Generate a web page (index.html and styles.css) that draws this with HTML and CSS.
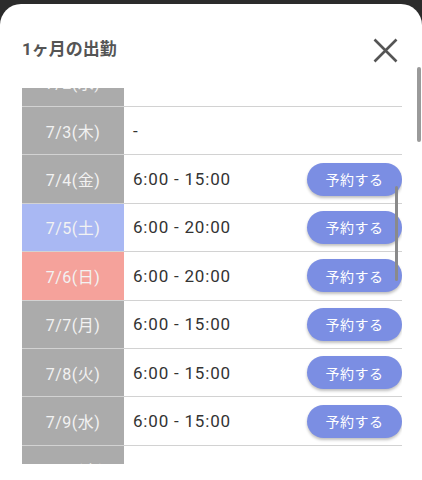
FILE: index.html
```html
<!DOCTYPE html>
<html lang="ja">
<head>
<meta charset="utf-8">
<link rel="stylesheet" href="styles.css">
</head>
<body>
<div class="modal">
  <div class="header">
    <h1 class="title">1ヶ月の出勤</h1>
    <svg class="close" width="25" height="25" viewBox="0 0 25 25"><path d="M1.5 1.5 L23.5 23.5 M23.5 1.5 L1.5 23.5" stroke="#555" stroke-width="2.6" fill="none"/></svg>
  </div>
  <div class="list">
    <div class="rows">
      <div class="row"><div class="date">7/2(水)</div><div class="time">-</div></div>
      <div class="row"><div class="date">7/3(木)</div><div class="time">-</div></div>
      <div class="row"><div class="date">7/4(金)</div><div class="time">6:00 - 15:00</div><button class="btn">予約する</button></div>
      <div class="row"><div class="date sat">7/5(土)</div><div class="time">6:00 - 20:00</div><button class="btn">予約する</button></div>
      <div class="row"><div class="date sun">7/6(日)</div><div class="time">6:00 - 20:00</div><button class="btn">予約する</button></div>
      <div class="row"><div class="date">7/7(月)</div><div class="time">6:00 - 15:00</div><button class="btn">予約する</button></div>
      <div class="row"><div class="date">7/8(火)</div><div class="time">6:00 - 15:00</div><button class="btn">予約する</button></div>
      <div class="row"><div class="date">7/9(水)</div><div class="time">6:00 - 15:00</div><button class="btn">予約する</button></div>
      <div class="row"><div class="date">7/10(木)</div><div class="time">-</div></div>
    </div>
  </div>
  <div class="scroll-outer"></div>
  <div class="scroll-inner"></div>
</div>
</body>
</html>
```
FILE: styles.css
```css
html, body {
  margin: 0;
  padding: 0;
  background: #2b2b2b;
  font-family: Roboto, "Noto Sans CJK JP", sans-serif;
}
.modal {
  position: relative;
  margin-top: 4px;
  height: 476px;
  box-sizing: border-box;
  background: #fff;
  border-radius: 21px 21px 0 0;
  padding: 33px 20px 0 22px;
}
.header {
  display: flex;
  justify-content: space-between;
  align-items: center;
  height: 24px;
}
.title {
  margin: 0;
  font-size: 17px;
  font-weight: bold;
  color: #555;
  line-height: 24px;
}
.close {
  display: block;
  margin-right: 4px;
  margin-top: 2px;
}
.list {
  margin-top: 27px;
  height: 376px;
  overflow: hidden;
}
.rows {
  margin-top: -29.5px;
}
.row {
  display: flex;
  align-items: center;
  height: 48.43px;
  box-sizing: border-box;
  border-bottom: 1px solid #d2d2d2;
}
.date {
  align-self: stretch;
  width: 102px;
  flex: none;
  display: flex;
  align-items: center;
  justify-content: center;
  background: #ababab;
  color: #f2f2f2;
  font-size: 16px;
  letter-spacing: 0.5px;
}
.date.sat { background: #a9b8f3; }
.date.sun { background: #f5a29b; }
.time {
  padding-left: 9px;
  font-size: 17px;
  letter-spacing: 0.8px;
  color: #333;
}
.btn {
  margin-left: auto;
  width: 95px;
  height: 33px;
  border: none;
  border-radius: 17px;
  background: #7b8ee3;
  color: #fff;
  font-family: inherit;
  font-size: 14px;
  letter-spacing: 0.5px;
  box-shadow: 0 2px 3px rgba(0, 0, 0, 0.25);
  padding: 0;
}
.scroll-outer {
  position: absolute;
  right: 1px;
  top: 63px;
  width: 4px;
  height: 75px;
  border-radius: 2px;
  background: #9a9a9a;
}
.scroll-inner {
  position: absolute;
  left: 395px;
  top: 182px;
  width: 3px;
  height: 95px;
  border-radius: 2px;
  background: #8a8a8a;
}
```
